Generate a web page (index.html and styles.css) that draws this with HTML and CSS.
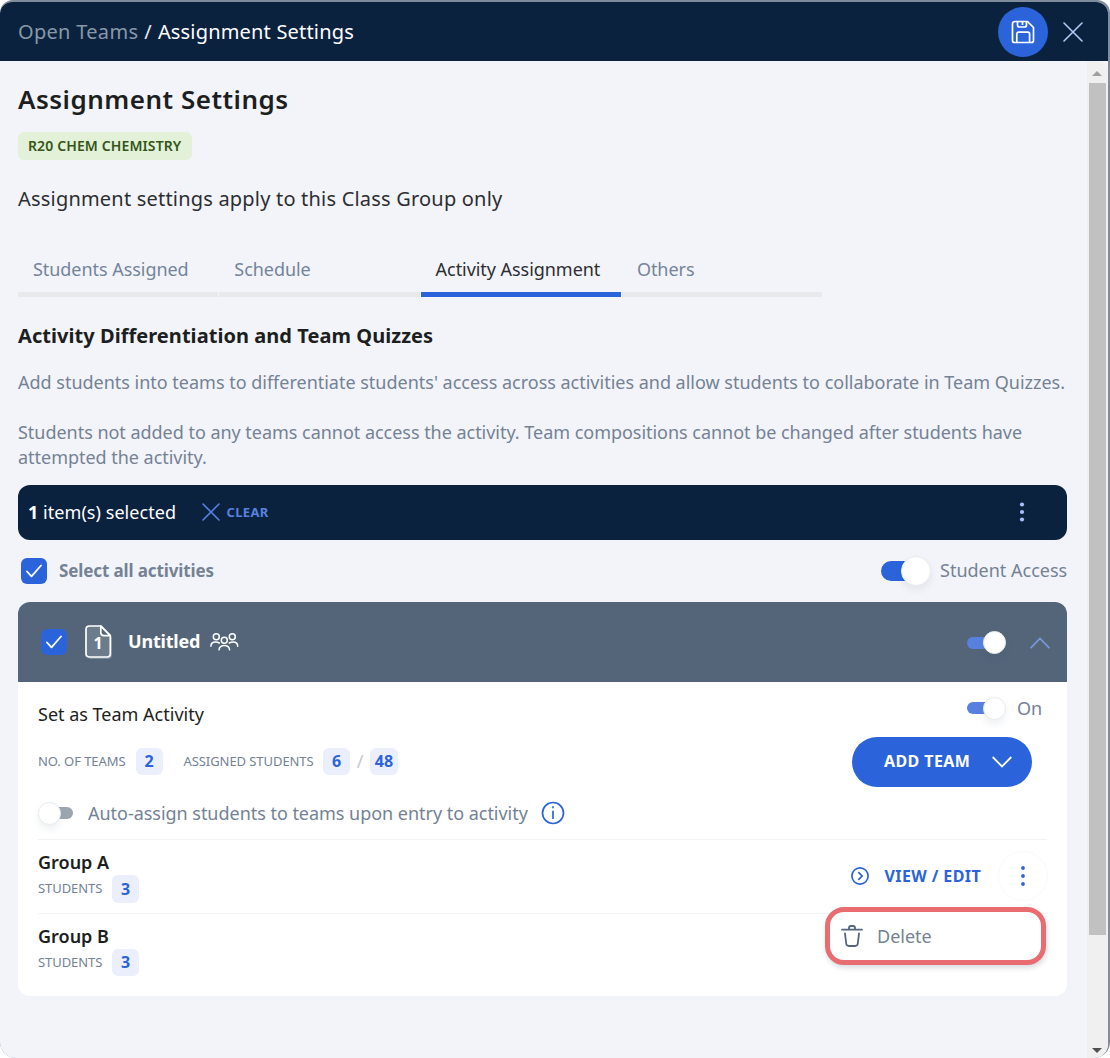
FILE: index.html
```html
<!DOCTYPE html>
<html lang="en">
<head>
<meta charset="utf-8">
<title>Assignment Settings</title>
<link rel="stylesheet" href="styles.css">
</head>
<body>
<div class="window">
  <header class="topbar">
    <nav class="crumbs"><span class="crumb-parent">Open Teams</span><span class="crumb-sep">/</span><span class="crumb-current">Assignment Settings</span></nav>
    <button class="save" aria-label="Save">
      <svg width="24" height="24" viewBox="0 0 24 24" fill="none" stroke="#fff" stroke-width="1.7" stroke-linejoin="round"><path d="M4 1.5H16.5L22.5 7.5V20.5Q22.500 22.500 20.500 22.500H3.500Q1.500 22.500 1.500 20.500V4Q1.500 1.500 4 1.500Z"/><path d="M5.800 22V14Q5.800 12.200 7.600 12.200H16.800Q18.600 12.200 18.600 14V22"/><path d="M6.500 1.800V5Q6.500 7 8.500 7H13.500Q15.500 7 15.500 5V1.800M11.500 2V5"/></svg>
    </button>
    <button class="close" aria-label="Close">
      <svg width="20" height="20" viewBox="0 0 20 20" fill="none" stroke="#b3c9f5" stroke-width="1.6" stroke-linecap="round"><path d="M1 1L19 19M19 1L1 19"/></svg>
    </button>
  </header>
  <div class="viewport">
    <main class="content">
      <h1 class="title">Assignment Settings</h1>
      <div class="class-chip">R20 CHEM CHEMISTRY</div>
      <p class="scope">Assignment settings apply to this Class Group only</p>
      <div class="tabs">
        <a class="tab">Students Assigned</a>
        <a class="tab">Schedule</a>
        <a class="tab tab-active">Activity Assignment</a>
        <a class="tab">Others</a>
      </div>
      <h2 class="section-title">Activity Differentiation and Team Quizzes</h2>
      <p class="help help-first">Add students into teams to differentiate students' access across activities and allow students to collaborate in Team Quizzes.</p>
      <p class="help help-second">Students not added to any teams cannot access the activity. Team compositions cannot be changed after students have<br>attempted the activity.</p>

      <div class="selection-bar">
        <span class="selected-count"><b>1</b> item(s) selected</span>
        <svg class="clear-icon" width="18" height="18" viewBox="0 0 18 18" fill="none" stroke="#5881df" stroke-width="1.6" stroke-linecap="round"><path d="M1 1L17 17M17 1L1 17"/></svg>
        <span class="clear">CLEAR</span>
        <svg class="bar-menu" width="6" height="20" viewBox="0 0 6 20" fill="#a8c0f5"><circle cx="3" cy="2.500" r="2.100"/><circle cx="3" cy="10" r="2.100"/><circle cx="3" cy="17.500" r="2.100"/></svg>
      </div>

      <div class="select-row">
        <span class="check"><svg width="16" height="14" viewBox="0 0 16 14" fill="none" stroke="#fff" stroke-width="1.800" stroke-linecap="round" stroke-linejoin="round"><path d="M1 7.500L5.500 12.300L15 1.500"/></svg></span>
        <span class="select-label">Select all activities</span>
        <span class="switch switch-large"><i class="knob"></i></span>
        <span class="access-label">Student Access</span>
      </div>

      <section class="card">
        <div class="card-head">
          <span class="check"><svg width="16" height="14" viewBox="0 0 16 14" fill="none" stroke="#fff" stroke-width="1.800" stroke-linecap="round" stroke-linejoin="round"><path d="M1 7.500L5.500 12.300L15 1.500"/></svg></span>
          <span class="doc">
            <svg class="doc-shape" width="28" height="35" viewBox="0 0 28 35" fill="none" stroke-width="1.700" stroke-linejoin="round"><path d="M6 3H18L27 12V30Q27 34 23 34H6Q3 34 3 31Z" fill="#7d8a9a" stroke="none"/><path d="M4.500 1H16L25.300 10.500V28.500Q25.300 32 22 32H4.500Q1 32 1 28.500V4.500Q1 1 4.500 1Z" fill="#6d7c8d" stroke="#fff"/><path d="M15.800 1.200V7.500Q15.800 10.700 19 10.700H25.200Z" fill="#54657a" stroke="#fff"/></svg>
            <b class="doc-number">1</b>
          </span>
          <span class="activity-name">Untitled</span>
          <svg class="people" width="30" height="20" viewBox="0 0 30 20" fill="none" stroke="#fff" stroke-width="1.500" stroke-linecap="round"><circle cx="6.300" cy="4.800" r="3"/><circle cx="22.300" cy="4.800" r="3"/><circle cx="14.300" cy="8.300" r="3"/><path d="M.9 14.300Q.9 10 5.500 10Q7.700 10 9.300 11M27.700 14.300Q27.700 10 23.100 10Q20.900 10 19.300 11M9 17.800Q9.500 13.600 14.300 13.600Q19.100 13.600 19.600 17.800"/></svg>
          <span class="switch head-switch"><i class="knob"></i></span>
          <svg class="collapse" width="20" height="12" viewBox="0 0 20 12" fill="none" stroke="#7899dc" stroke-width="1.700"><path d="M.6 11.200L10 1.500L19.400 11.200"/></svg>
        </div>

        <div class="card-body">
          <div class="team-top">
            <div class="team-info">
              <div class="team-title">Set as Team Activity</div>
              <div class="counts">
                <span class="caption teams-caption">NO. OF TEAMS</span><span class="badge">2</span>
                <span class="caption assigned-caption">ASSIGNED STUDENTS</span><span class="badge">6</span><span class="slash">/</span><span class="badge badge-wide">48</span>
              </div>
              <div class="auto-row">
                <span class="switch switch-off"><i class="knob"></i></span>
                <span class="auto-label">Auto-assign students to teams upon entry to activity</span>
                <svg width="24" height="24" viewBox="0 0 24 24" fill="none" stroke="#2b64da" stroke-width="1.700"><circle cx="12" cy="12" r="10.500"/><path d="M12 9.800V18M12 5.300V7.200"/></svg>
              </div>
            </div>
            <div class="team-actions">
              <div class="on-row"><span class="switch"><i class="knob"></i></span><span class="on-label">On</span></div>
              <button class="add-team"><span>ADD TEAM</span><svg width="20" height="12" viewBox="0 0 20 12" fill="none" stroke="#fff" stroke-width="1.800"><path d="M.7 1L10 10.500L19.300 1"/></svg></button>
            </div>
          </div>

          <div class="group">
            <div>
              <div class="group-name">Group A</div>
              <div class="group-count"><span class="caption students-caption">STUDENTS</span><span class="badge badge-tall">3</span></div>
            </div>
            <svg class="view-icon" width="18" height="18" viewBox="0 0 18 18" fill="none" stroke="#2b64da" stroke-width="1.700"><circle cx="9" cy="9" r="8.100"/><path d="M7.300 5.200L11.100 9L7.300 12.800"/></svg>
            <span class="view-label">VIEW / EDIT</span>
            <span class="row-menu"><svg width="6" height="20" viewBox="0 0 6 20" fill="#2b64da"><circle cx="3" cy="2" r="1.900"/><circle cx="3" cy="10" r="1.900"/><circle cx="3" cy="18" r="1.900"/></svg></span>
          </div>

          <div class="group group-last">
            <div>
              <div class="group-name">Group B</div>
              <div class="group-count"><span class="caption students-caption">STUDENTS</span><span class="badge">3</span></div>
            </div>
            <div class="popup">
              <svg width="22" height="22" viewBox="0 0 22 22" fill="none" stroke="#54657a" stroke-width="1.800" stroke-linecap="round" stroke-linejoin="round"><path d="M1 4.700H21M8 4.500V3Q8 1 10 1H12Q14 1 14 3V4.500M4 8.500L5.200 18.500Q5.500 21 8 21H14Q16.500 21 16.800 18.500L18 8.500"/></svg>
              <span>Delete</span>
            </div>
          </div>
        </div>
      </section>
    </main>
    <div class="scrollbar">
      <span class="arrow arrow-up"></span>
      <span class="thumb"></span>
      <span class="arrow arrow-down"></span>
    </div>
  </div>
</div>
</body>
</html>
```
FILE: styles.css
```css
* { box-sizing: border-box; }
html { background: #fff; }
body {
  margin: 0;
  width: 1110px;
  height: 1058px;
  overflow: hidden;
  padding: 2px 2px 0 0;
  background: #7f8c9c;
  border-radius: 13px 13px 16px 16px;
  font-family: "Noto Sans", "Open Sans", sans-serif;
  font-size: 18px;
  color: #1c1e21;
  white-space: nowrap;
}
h1, h2, p { margin: 0; }
button { border: 0; padding: 0; font-family: inherit; }
svg { display: block; flex: none; }
.window {
  display: flex;
  flex-direction: column;
  width: 1108px;
  height: 1056px;
  overflow: hidden;
  background: #f3f4f9;
  border-radius: 12px 12px 14px 14px;
}

.topbar {
  display: flex;
  align-items: center;
  height: 59px;
  flex: none;
  padding: 0 25px 0 18px;
  background: #0b223f;
}
.crumbs {
  display: flex;
  gap: 6px;
  flex: 1;
  font-size: 20px;
  line-height: 30px;
  letter-spacing: .18px;
  color: #fff;
}
.crumb-parent { color: #8898a8; letter-spacing: .3px; }
.crumb-sep { color: #e4e8ee; }
.save {
  display: grid;
  place-items: center;
  width: 50px;
  height: 50px;
  border-radius: 50%;
  background: #2b64da;
}
.close { margin-left: 15px; background: none; }

.viewport { display: flex; flex: 1; min-height: 0; }
.content { width: 1087px; padding: 20px 20px 0 18px; }
.title { font-size: 26px; line-height: 36px; font-weight: 600; letter-spacing: .5px; }
.class-chip {
  width: 174px;
  height: 28px;
  margin-top: 15px;
  padding-left: 10px;
  border-radius: 6px;
  background: #e2f1d7;
  color: #345618;
  font-size: 14px;
  line-height: 28px;
  font-weight: 600;
  letter-spacing: .12px;
}
.scope { margin-top: 24px; font-size: 20px; line-height: 30px; letter-spacing: .2px; color: #2c2e31; }

.tabs { display: flex; gap: 1px; margin-top: 33px; }
.tab {
  width: 200.300px;
  height: 50px;
  padding-left: 15px;
  border-bottom: 5px solid #e8e9ed;
  font-size: 18px;
  line-height: 45px;
  letter-spacing: -.05px;
  color: #74849a;
}
.tab-active { border-color: #2b64da; color: #2c2e31; }

.section-title { margin-top: 26px; font-size: 20px; line-height: 26px; font-weight: 700; letter-spacing: .05px; }
.help { font-size: 18px; line-height: 25px; color: #738295; }
.help-first { margin-top: 21px; letter-spacing: -.01px; }
.help-second { margin-top: 25px; letter-spacing: -.03px; }

.selection-bar {
  display: flex;
  align-items: center;
  height: 55px;
  margin-top: 15px;
  padding: 0 42px 2px 10px;
  border-radius: 12px;
  background: #0b223f;
  color: #fff;
}
.selected-count { width: 174px; font-size: 18px; letter-spacing: .05px; }
.clear { margin-left: 6.5px; flex: 1; color: #5881df; font-size: 13px; font-weight: 700; letter-spacing: .35px; }

.select-row { display: flex; align-items: center; height: 62px; padding-left: 3px; color: #738295; }
.check {
  display: grid;
  place-items: center;
  flex: none;
  width: 26px;
  height: 26px;
  border-radius: 6px;
  background: #2b64da;
}
.select-label { flex: 1; margin-left: 12px; padding-bottom: 1px; font-size: 17px; font-weight: 700; letter-spacing: -.12px; }
.access-label { width: 127px; margin-left: 9px; padding-bottom: 2px; font-size: 18px; }

.switch {
  display: flex;
  align-items: center;
  justify-content: flex-end;
  width: 39px;
  height: 12px;
  flex: none;
  border-radius: 6px;
  background: linear-gradient(90deg, #5881df 25px, transparent 25px);
}
.knob {
  width: 23px;
  height: 23px;
  flex: none;
  border-radius: 50%;
  border: 1px solid #e9ebee;
  background: #fff;
  box-shadow: 0 4px 7px rgba(40, 60, 85, .08);
}
.switch-large {
  width: 50px;
  height: 20px;
  border-radius: 10px;
  background: linear-gradient(90deg, #2b64da 32px, transparent 32px);
}
.switch-large .knob { width: 30px; height: 30px; }
.switch-off {
  justify-content: flex-start;
  width: 35px;
  background: linear-gradient(90deg, transparent 15px, #9ba6b1 15px);
}

.card { border-radius: 12px; background: #fff; }
.card-head {
  display: flex;
  align-items: center;
  height: 80px;
  padding: 0 17px 0 23px;
  border-radius: 12px 12px 0 0;
  background: #54657a;
  color: #fff;
}
.doc { display: grid; width: 28px; height: 35px; margin-left: 18px; }
.doc-shape, .doc-number { grid-area: 1 / 1; }
.doc-number { font-size: 16px; line-height: 36px; padding-left: 8.5px; }
.activity-name { margin-left: 15px; padding-bottom: 2px; font-size: 18px; font-weight: 700; letter-spacing: -.2px; }
.people { margin-left: 10px; }
.head-switch { margin-left: auto; margin-top: 1px; }
.collapse { margin-left: 24px; margin-top: 1px; }

.card-body { height: 314px; padding: 10px 20px 0; }
.team-top { display: flex; justify-content: space-between; height: 148px; border-bottom: 1px solid #f2f3f5; }
.team-title { margin-top: 9px; line-height: 26px; font-size: 18px; }
.counts { display: flex; align-items: center; height: 28px; margin-top: 20px; }
.caption { font-size: 13px; color: #738295; letter-spacing: -.07px; }
.teams-caption { width: 97.5px; }
.assigned-caption { width: 139.5px; margin-left: 21px; }
.students-caption { width: 74px; }
.badge {
  width: 27px;
  height: 27px;
  border-radius: 6px;
  background: #ebeefb;
  color: #2b64da;
  font-size: 16px;
  line-height: 27px;
  font-weight: 700;
  text-align: center;
}
.badge-wide { width: 28px; }
.badge-tall { height: 28px; line-height: 28px; }
.slash { width: 20px; color: #c4c9cf; text-align: center; }
.auto-row { display: flex; align-items: center; height: 26px; margin-top: 25px; }
.auto-label { width: 440px; margin: 0 13px 0 15px; color: #738295; letter-spacing: -.03px; }
.team-actions { width: 195px; }
.on-row { display: flex; align-items: center; height: 32px; padding-left: 115px; }
.on-label { margin-left: 11px; color: #738295; }
.add-team {
  display: flex;
  align-items: center;
  justify-content: space-between;
  width: 180px;
  height: 50px;
  margin-top: 13px;
  padding: 0 20px 0 32px;
  border-radius: 25px;
  background: #2b64da;
  color: #fff;
  font-size: 16px;
  font-weight: 700;
  letter-spacing: .4px;
}
.add-team span { padding-bottom: 2px; }

.group { display: flex; align-items: center; height: 74px; padding-bottom: 2px; border-bottom: 1px solid #f2f3f5; }
.group-last { border: 0; padding-bottom: 4px; position: relative; }
.group-name { line-height: 26px; font-size: 18px; font-weight: 600; }
.group-count { display: flex; align-items: center; height: 27px; }
.group-count .caption { padding-bottom: 1px; }
.view-icon { margin-left: auto; }
.view-label { width: 98px; margin: 0 15px 0 16px; color: #2b64da; font-size: 16px; font-weight: 700; letter-spacing: .4px; }
.row-menu {
  display: grid;
  place-items: center;
  width: 50px;
  height: 50px;
  border: 1px solid #fafafb;
  border-radius: 50%;
  margin-right: -.5px;
}
.popup {
  position: absolute;
  right: 1px;
  top: -7px;
  display: flex;
  align-items: center;
  gap: 14px;
  width: 221px;
  height: 58px;
  padding-left: 11px;
  border: 5px solid #e96d70;
  border-radius: 19px;
  background: #fff;
  box-shadow: 1px 3px 5px rgba(30, 40, 60, .16);
  color: #738295;
}

.scrollbar {
  display: flex;
  flex-direction: column;
  align-items: center;
  width: 21px;
  padding: 10px 1px 5px 0;
  border-radius: 0 12px 14px 0;
  background: #f0f0f1;
}
.arrow { border: 5px solid transparent; border-top: 0; }
.arrow-up { border-bottom-color: #a0a0a0; }
.arrow-down { margin-top: auto; border-top: 5px solid #505050; border-bottom: 0; }
.thumb { width: 17px; height: 852px; margin-top: 7px; background: #c1c1c1; }
```
